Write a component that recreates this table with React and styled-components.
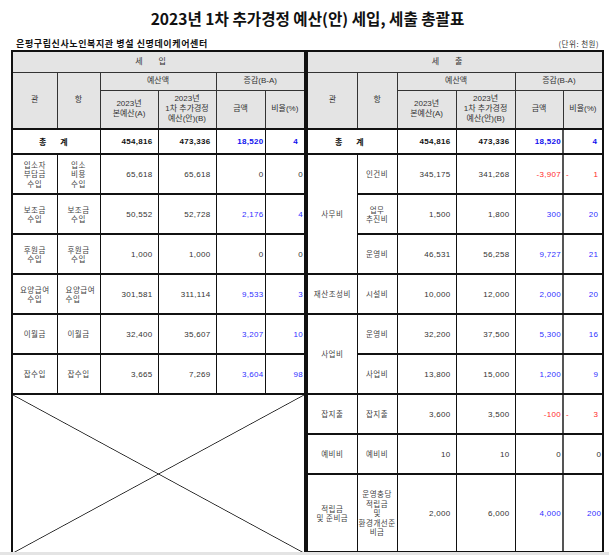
import React from 'react';
import styled, { createGlobalStyle } from 'styled-components';

const GlobalStyle = createGlobalStyle`
  body {
    margin: 0;
    background: #e4e4e4;
    font-family: 'Liberation Sans', 'Noto Sans CJK KR', sans-serif;
  }
`;

const Page = styled.div`
  width: 609px;
  height: 552px;
  background: #fff;
  box-sizing: border-box;
  padding-top: 9px;
`;

const Title = styled.h1`
  margin: 0;
  padding-left: 6px;
  text-align: center;
  font-family: 'Noto Sans CJK KR', sans-serif;
  font-size: 15.6px;
  line-height: 18px;
  font-weight: 700;
  color: #111;
`;

const InfoRow = styled.div`
  display: flex;
  justify-content: space-between;
  align-items: flex-end;
  margin-top: 11px;
  padding: 0 10px 0 16px;
  height: 11px;
`;

const Org = styled.span`
  font-family: 'Noto Sans CJK KR', sans-serif;
  font-size: 9px;
  line-height: 10px;
  font-weight: 700;
  letter-spacing: 0.6px;
  color: #111;
`;

const Unit = styled.span`
  font-family: 'Noto Sans CJK KR', sans-serif;
  font-size: 7.5px;
  line-height: 10px;
  color: #333;
  letter-spacing: 0.5px;
`;

const Tables = styled.div`
  display: flex;
  align-items: flex-start;
  margin-top: 1px;
  padding-left: 11px;
`;

const Table = styled.table`
  border-collapse: collapse;
  table-layout: fixed;
  width: ${(p) => p.$w}px;
  border: 2px solid #111;
  font-size: 8px;
  color: #333;
`;

const HeadCell = styled.th`
  background: #e4e4e4;
  border: 1px solid #333;
  border-bottom-width: ${(p) => (p.$thick ? 2 : 1)}px;
  border-bottom-color: ${(p) => (p.$thick ? '#111' : '#333')};
  padding: 0;
  font-weight: 400;
  font-size: 8px;
  line-height: 10px;
  letter-spacing: ${(p) => p.$spread || 0}px;
  white-space: pre-line;
  text-align: center;
  color: #333;
`;

const Label = styled.td`
  border-left: 1px solid #111;
  border-right: 1px solid #111;
  border-top: 2px solid #111;
  border-bottom: 2px solid #111;
  padding: 0 ${(p) => (p.$left ? 0 : 1)}px 0 ${(p) => p.$left || 1}px;
  font-family: 'Noto Sans CJK KR', sans-serif;
  font-size: ${(p) => (p.$bold ? 8 : 7.5)}px;
  line-height: 9.5px;
  white-space: pre-line;
  text-align: ${(p) => (p.$left ? 'left' : 'center')};
  color: ${(p) => (p.$bold ? '#111' : '#444')};
  font-weight: ${(p) => (p.$bold ? 700 : 400)};
  letter-spacing: ${(p) => p.$spread || 0.5}px;
`;

const Num = styled.td`
  border-left: 1px solid #111;
  border-right: ${(p) => (p.$grayRight ? '2px solid #555' : '1px solid #111')};
  border-top: 2px solid #111;
  border-bottom: 2px solid #111;
  padding: 0 ${(p) => p.$pr}px 0 2px;
  text-align: right;
  font-size: 8px;
  letter-spacing: 0.3px;
  color: ${(p) => p.$color || '#333'};
  font-weight: ${(p) => (p.$bold ? 700 : 400)};
`;

const Split = styled.div`
  display: flex;
  justify-content: space-between;
`;

const Crossed = styled.td`
  height: 158px;
  padding: 0;
  border: 2px solid #111;
  background:
    linear-gradient(to top right, transparent calc(50% - 0.8px), #222 50%, transparent calc(50% + 0.8px)),
    linear-gradient(to bottom right, transparent calc(50% - 0.8px), #222 50%, transparent calc(50% + 0.8px));
`;

const Row = styled.tr`
  height: ${(p) => p.$h}px;
`;

const BLUE = '#2f2fff';
const RED = '#ff2a2a';

const leftRows = [
  { g: '입소자\n부담금\n수입', i: '입소\n비용\n수입', a: '65,618', b: '65,618', d: '0', r: '0' },
  { g: '보조금\n수입', i: '보조금\n수입', a: '50,552', b: '52,728', d: '2,176', r: '4', c: BLUE },
  { g: '후원금\n수입', i: '후원금\n수입', a: '1,000', b: '1,000', d: '0', r: '0' },
  { g: '요양급여\n수입', i: '요양급여\n수입', left: 8, a: '301,581', b: '311,114', d: '9,533', r: '3', c: BLUE },
  { g: '이월금', i: '이월금', a: '32,400', b: '35,607', d: '3,207', r: '10', c: BLUE },
  { g: '잡수입', i: '잡수입', a: '3,665', b: '7,269', d: '3,604', r: '98', c: BLUE },
];

const rightRows = [
  { g: '사무비', span: 3, i: '인건비', a: '345,175', b: '341,268', d: '-3,907', r: '1', c: RED, neg: true },
  { i: '업무\n추진비', a: '1,500', b: '1,800', d: '300', r: '20', c: BLUE },
  { i: '운영비', a: '46,531', b: '56,258', d: '9,727', r: '21', c: BLUE },
  { g: '재산조성비', span: 1, i: '시설비', a: '10,000', b: '12,000', d: '2,000', r: '20', c: BLUE },
  { g: '사업비', span: 2, i: '운영비', a: '32,200', b: '37,500', d: '5,300', r: '16', c: BLUE },
  { i: '사업비', a: '13,800', b: '15,000', d: '1,200', r: '9', c: BLUE },
  { g: '잡지출', span: 1, i: '잡지출', a: '3,600', b: '3,500', d: '-100', r: '3', c: RED, neg: true },
  { g: '예비비', span: 1, i: '예비비', a: '10', b: '10', d: '0', r: '0' },
  {
    g: '적립금\n및 준비금', span: 1, i: '운영충당\n적립금\n및\n환경개선준\n비금',
    a: '2,000', b: '6,000', d: '4,000', r: '200', c: BLUE, h: 78,
  },
];

const Header = ({ title }) => (
  <>
    <Row $h={21}>
      <HeadCell colSpan={6} $spread={16}>{title}</HeadCell>
    </Row>
    <Row $h={18}>
      <HeadCell rowSpan={2} $thick>관</HeadCell>
      <HeadCell rowSpan={2} $thick>항</HeadCell>
      <HeadCell colSpan={2}>예산액</HeadCell>
      <HeadCell colSpan={2}>증감(B-A)</HeadCell>
    </Row>
    <Row $h={39}>
      <HeadCell $thick>{'2023년\n본예산(A)'}</HeadCell>
      <HeadCell $thick>{'2023년\n1차 추가경정\n예산(안)(B)'}</HeadCell>
      <HeadCell $thick>금액</HeadCell>
      <HeadCell $thick>비율(%)</HeadCell>
    </Row>
  </>
);

const TotalRow = ({ gray }) => (
  <Row $h={25}>
    <Label colSpan={2} $bold $spread={6}>총 계</Label>
    <Num $pr={5} $bold $color="#111">454,816</Num>
    <Num $pr={5} $bold $color="#111">473,336</Num>
    <Num $pr={1} $bold $color="#1010ee" $grayRight={gray}>18,520</Num>
    <Num $pr={gray ? 5 : 6} $bold $color="#1010ee">4</Num>
  </Row>
);

const App = () => (
  <Page>
    <GlobalStyle />
    <Title>2023년 1차 추가경정 예산(안) 세입, 세출 총괄표</Title>
    <InfoRow>
      <Org>은평구립신사노인복지관 병설 신명데이케어센터</Org>
      <Unit>(단위: 천원)</Unit>
    </InfoRow>
    <Tables>
      <Table $w={293}>
        <colgroup>
          <col style={{ width: 45 }} />
          <col style={{ width: 43 }} />
          <col style={{ width: 58 }} />
          <col style={{ width: 58 }} />
          <col style={{ width: 49 }} />
          <col style={{ width: 40 }} />
        </colgroup>
        <tbody>
          <Header title="세입" />
          <TotalRow />
          {leftRows.map((r) => (
            <Row $h={40} key={r.g + r.a}>
              <Label>{r.g}</Label>
              <Label $left={r.left}>{r.i}</Label>
              <Num $pr={5}>{r.a}</Num>
              <Num $pr={5}>{r.b}</Num>
              <Num $pr={1} $color={r.c}>{r.d}</Num>
              <Num $pr={1} $color={r.c}>{r.r}</Num>
            </Row>
          ))}
          <tr>
            <Crossed colSpan={6} />
          </tr>
        </tbody>
      </Table>
      <Table $w={296}>
        <colgroup>
          <col style={{ width: 50 }} />
          <col style={{ width: 40 }} />
          <col style={{ width: 59 }} />
          <col style={{ width: 59 }} />
          <col style={{ width: 48 }} />
          <col style={{ width: 40 }} />
        </colgroup>
        <tbody>
          <Header title="세출" />
          <TotalRow gray />
          {rightRows.map((r) => (
            <Row $h={r.h || 40} key={r.i + r.a}>
              {r.g && <Label rowSpan={r.span}>{r.g}</Label>}
              <Label>{r.i}</Label>
              <Num $pr={5}>{r.a}</Num>
              <Num $pr={5}>{r.b}</Num>
              <Num $pr={1} $color={r.c} $grayRight>{r.d}</Num>
              <Num $pr={r.r === '200' || r.r === '0' ? 1 : 4} $color={r.c}>
                {r.neg ? (
                  <Split>
                    <span>-</span>
                    <span>{r.r}</span>
                  </Split>
                ) : (
                  r.r
                )}
              </Num>
            </Row>
          ))}
        </tbody>
      </Table>
    </Tables>
  </Page>
);

export default App;
